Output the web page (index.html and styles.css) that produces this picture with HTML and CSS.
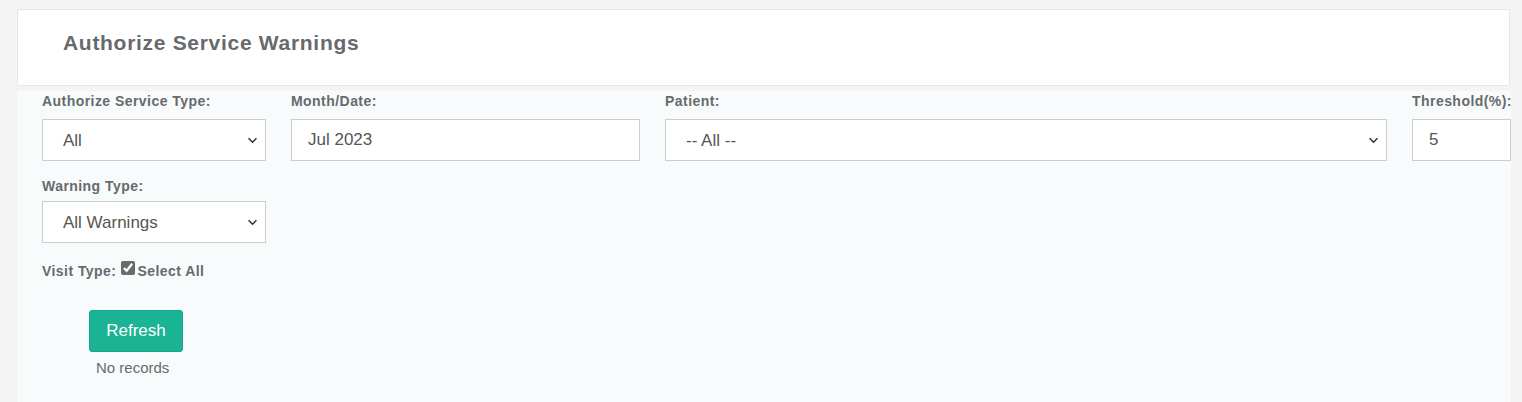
FILE: index.html
```html
<!DOCTYPE html>
<html lang="en">
<head>
  <meta charset="UTF-8" />
  <title>Authorize Service Warnings</title>
  <link rel="stylesheet" href="styles.css">
</head>
<body>
  <div class="page-heading">
    <h2>Authorize Service Warnings</h2>
  </div>

  <div class="content">
    <div class="filters">
      <div class="field">
        <label>Authorize Service Type:</label>
        <select class="form-control">
          <option>All</option>
        </select>
      </div>
      <div class="field">
        <label>Month/Date:</label>
        <input type="text" class="form-control plain" value="Jul 2023" />
      </div>
      <div class="field">
        <label>Patient:</label>
        <select class="form-control">
          <option>-- All --</option>
        </select>
      </div>
      <div class="field">
        <label>Threshold(%):</label>
        <input type="text" class="form-control plain" value="5" />
      </div>
      <div class="field second">
        <label>Warning Type:</label>
        <select class="form-control">
          <option>All Warnings</option>
        </select>
      </div>
    </div>

    <div class="visit-type">
      <label>Visit Type:</label>
      <input type="checkbox" checked />
      <label>Select All</label>
    </div>

    <div class="actions">
      <button class="btn-refresh">Refresh</button>
      <div class="no-records">No records</div>
    </div>
  </div>
</body>
</html>
```

FILE: styles.css
```css
body {
  margin: 0;
  background: #f4f4f4;
  font-family: "Liberation Sans", Arial, sans-serif;
  color: #676a6c;
  overflow: hidden;
}

.page-heading {
  margin: 9px 12px 0 17px;
  height: 77px;
  box-sizing: border-box;
  background: #fff;
  border: 1px solid #e7e7e7;
  padding: 21px 45px 0;
}

.page-heading h2 {
  margin: 0;
  font-size: 21px;
  letter-spacing: 0.7px;
  line-height: 24px;
  font-weight: bold;
  color: #676a6c;
}

.content {
  margin: 5px 11px 0 17px;
  background: #f8fbfc;
  height: 320px;
  overflow: hidden;
}

.filters {
  display: grid;
  grid-template-columns: 249px 374px 747px 124px;
  padding-top: 3px;
}

.field {
  padding-left: 25px;
  margin-bottom: 8px;
}

.field label {
  display: block;
  font-size: 14px;
  letter-spacing: 0.45px;
  font-weight: bold;
  line-height: 15px;
  margin: 0 0 10px;
}

.field.second {
  margin-top: 10px;
}

.field.second label {
  margin-bottom: 7px;
}

.form-control {
  display: block;
  width: 100%;
  height: 42px;
  box-sizing: border-box;
  border: 1px solid #cdcdcd;
  border-radius: 0;
  background: #fff;
  font-family: "Liberation Sans", Arial, sans-serif;
  font-size: 17px;
  color: #555;
  padding: 0 12px 0 16px;
  outline: none;
}

select.form-control {
  appearance: none;
  padding-left: 20px;
  background-image: url("data:image/svg+xml;utf8,<svg xmlns='http://www.w3.org/2000/svg' width='12' height='8' viewBox='0 0 12 8'><path d='M1.5 1.5 L6 6 L10.5 1.5' fill='none' stroke='%23333' stroke-width='1.8'/></svg>");
  background-repeat: no-repeat;
  background-position: right 7px center;
  background-size: 11px 7px;
}

.visit-type {
  display: flex;
  align-items: center;
  padding: 11px 0 0 25px;
  font-size: 14px;
  letter-spacing: 0.45px;
  font-weight: bold;
  height: 18px;
}

.visit-type input {
  margin: -7px 2px 0 5px;
  width: 14px;
  height: 14px;
  accent-color: #6b6b6b;
}

.actions {
  width: 166px;
  padding: 30px 0 0 36px;
  text-align: center;
}

.btn-refresh {
  width: 94px;
  height: 42px;
  border: 1px solid #18a689;
  border-radius: 3px;
  background: #1ab394;
  color: #fff;
  font-family: "Liberation Sans", Arial, sans-serif;
  font-size: 17px;
  cursor: pointer;
}

.no-records {
  font-size: 15px;
  margin: 7px 0 0;
  text-align: left;
  padding-left: 43px;
  color: #676a6c;
}
```
